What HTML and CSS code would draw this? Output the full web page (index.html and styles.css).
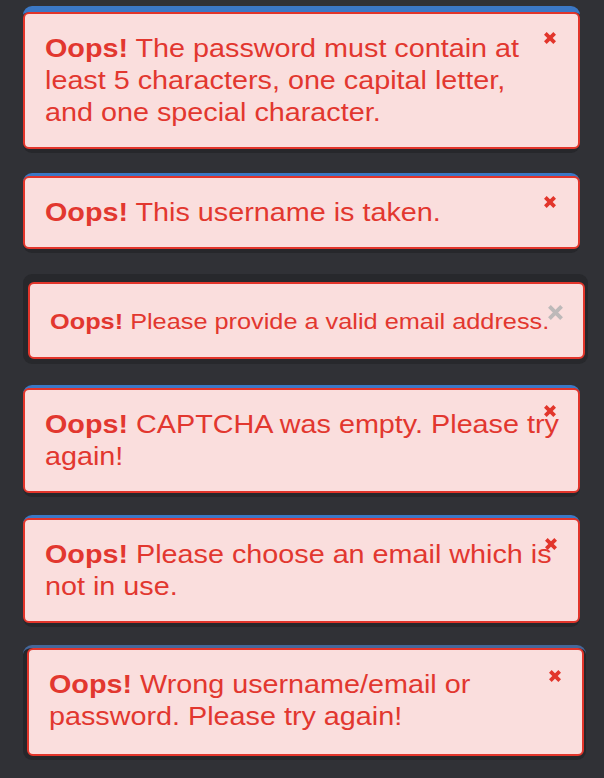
FILE: index.html
```html
<!DOCTYPE html>
<html lang="en">
<head>
<meta charset="utf-8">
<title>Alerts</title>
<link rel="stylesheet" href="styles.css">
</head>
<body>
<div class="page">
  <div class="card card-1 blue-thick">
    <div class="alert">
      <div class="msg msg-narrow"><strong>Oops!</strong> The password must contain at least 5 characters, one capital letter, and one special character.</div>
      <span class="close"><svg viewBox="0 0 12 12" width="14" height="14"><path d="M2 2 L10 10 M10 2 L2 10"/></svg></span>
    </div>
  </div>
  <div class="card card-2 blue">
    <div class="alert">
      <div class="msg"><strong>Oops!</strong> This username is taken.</div>
      <span class="close"><svg viewBox="0 0 12 12" width="14" height="14"><path d="M2 2 L10 10 M10 2 L2 10"/></svg></span>
    </div>
  </div>
  <div class="card card-3 dark">
    <div class="alert alert-small">
      <div class="msg msg-small"><strong>Oops!</strong> Please provide a valid email address.</div>
      <span class="close close-gray"><svg viewBox="0 0 14 14" width="17" height="17"><path d="M2 2 L12 12 M12 2 L2 12"/></svg></span>
    </div>
  </div>
  <div class="card card-4 blue">
    <div class="alert">
      <div class="msg"><strong>Oops!</strong> CAPTCHA was empty. Please try again!</div>
      <span class="close close-4"><svg viewBox="0 0 12 12" width="14" height="14"><path d="M2 2 L10 10 M10 2 L2 10"/></svg></span>
    </div>
  </div>
  <div class="card card-5 blue">
    <div class="alert">
      <div class="msg"><strong>Oops!</strong> Please choose an email which is not in use.</div>
      <span class="close close-5"><svg viewBox="0 0 12 12" width="14" height="14"><path d="M2 2 L10 10 M10 2 L2 10"/></svg></span>
    </div>
  </div>
  <div class="card card-6 blue-gray">
    <div class="alert alert-tall">
      <div class="msg"><strong>Oops!</strong> Wrong username/email or password. Please try again!</div>
      <span class="close close-6"><svg viewBox="0 0 12 12" width="14" height="14"><path d="M2 2 L10 10 M10 2 L2 10"/></svg></span>
    </div>
  </div>
</div>
</body>
</html>
```
FILE: styles.css
```css
html, body {
  margin: 0;
  padding: 0;
  background: #303136;
}

body {
  font-family: "Liberation Sans", Arial, sans-serif;
  width: 604px;
  height: 778px;
  overflow: hidden;
}

.page {
  display: flex;
  flex-direction: column;
  align-items: flex-start;
  padding-left: 23px;
}

.card {
  box-sizing: border-box;
  width: 557px;
  border-radius: 9px;
  background: #26272b;
  padding-bottom: 4px;
}

.blue-thick { border-top: 6px solid #3b78c6; }
.blue { border-top: 3px solid #3b78c6; }
.blue-gray { border-top: 3px solid #45679a; width: 563px; padding-left: 4px; padding-right: 2px; }
.dark { width: 565px; padding: 8px 3px 5px 5px; background: #27282c; }

.card-1 { margin-top: 6px; }
.card-2 { margin-top: 20px; }
.card-3 { margin-top: 21px; }
.card-4 { margin-top: 21px; }
.card-5 { margin-top: 18px; }
.card-6 { margin-top: 18px; }

.alert {
  position: relative;
  background: #fadedd;
  border: 2px solid #e2352b;
  border-radius: 6px;
  padding: 18px 12px 19px 20px;
  color: #e2372f;
  font-size: 25px;
  line-height: 32px;
}

.alert-tall {
  padding-bottom: 22px;
}

.msg {
  width: 453px;
  transform: scaleX(1.15);
  transform-origin: 0 0;
}

.msg-narrow {
  width: 444px;
}

.alert strong {
  font-weight: bold;
}

.alert-small {
  font-size: 22px;
  line-height: 28px;
  padding: 24px 12px 21px 20px;
}

.close {
  position: absolute;
  top: 17px;
  right: 21px;
  width: 14px;
  height: 14px;
  display: block;
}

.close svg {
  display: block;
  stroke: #e2352b;
  stroke-width: 3.2;
  stroke-linecap: butt;
  fill: none;
}

.close-gray {
  top: 20px;
  right: 19px;
  width: 17px;
  height: 17px;
}

.close-gray svg {
  stroke: #bdb9b9;
  stroke-width: 3.2;
}

.close-4 { top: 14px; }
.close-5 { top: 17px; right: 20px; }
.close-6 { top: 19px; right: 20px; }
```
